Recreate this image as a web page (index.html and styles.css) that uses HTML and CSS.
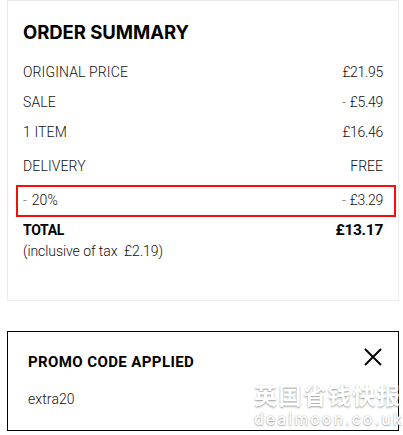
FILE: index.html
```html
<!DOCTYPE html>
<html lang="en">
<head>
  <meta charset="UTF-8">
  <title>Order Summary</title>
  <link rel="stylesheet" href="styles.css">
</head>
<body>

  <!-- Order summary -->
  <section class="summary">
    <h2>ORDER SUMMARY</h2>
    <div class="row"><span class="label">ORIGINAL PRICE</span><span class="price">£21.95</span></div>
    <div class="row"><span class="label">SALE</span><span class="price"><span class="minus">-</span> £5.49</span></div>
    <div class="row"><span class="label">1 ITEM</span><span class="price">£16.46</span></div>
    <div class="row delivery"><span class="label">DELIVERY</span><span>FREE</span></div>
    <div class="row discount"><span class="label"><span class="minus">-</span> 20%</span><span class="price"><span class="minus">-</span> £3.29</span></div>
    <div class="row total"><span>TOTAL</span><span class="total-price">£13.17</span></div>
    <p class="tax">(inclusive of tax &nbsp;£2.19)</p>
  </section>

  <!-- Promo code -->
  <section class="promo">
    <div class="promo-head">
      <h3>PROMO CODE APPLIED</h3>
      <svg class="close" width="18" height="18" viewBox="0 0 18 18">
        <path d="M1 1L17 17M17 1L1 17" fill="none" stroke="#000" stroke-width="1.9"/>
      </svg>
    </div>
    <p class="code">extra20</p>
    <div class="watermark">
      <div class="mark-cn">英国省钱快报</div>
      <div class="mark-url">dealmoon.co.uk</div>
    </div>
  </section>

</body>
</html>
```

FILE: styles.css
```css
* {
  box-sizing: border-box;
}
body {
  margin: 0;
  padding: 0 4px 0 7px;
  height: 435px;
  overflow: hidden;
  background-color: #fff;
  color: #111;
  font-family: Roboto, "Liberation Sans", sans-serif;
  font-size: 14px;
  font-weight: 300;
  line-height: 20px;
}
h2, h3, p {
  margin: 0;
}

/* Order summary */
.summary {
  height: 301px;
  padding: 18px 15px 0;
  border: 1px solid #ebebeb;
}
h2 {
  height: 43px;
  color: #000;
  font-family: Inter, sans-serif;
  font-size: 18.5px;
  font-weight: 700;
  line-height: 26px;
  letter-spacing: -0.05px;
}
.row {
  display: flex;
  justify-content: space-between;
  height: 20px;
  margin-bottom: 10px;
}
.label {
  letter-spacing: 0.12px;
}
.price {
  letter-spacing: -0.3px;
}
.minus {
  color: #777;
  margin-right: 1px;
}
.delivery {
  margin-top: 14px;
}
.discount {
  align-items: center;
  height: 32px;
  margin: -1px -13px 3px -7px;
  padding: 0 11px 2px 5px;
  border: 2px solid #f80d0d;
}
.total {
  margin-bottom: 1px;
  color: #000;
  font-weight: 700;
  letter-spacing: -0.3px;
}
.total-price {
  font-size: 15.5px;
}
.tax {
  letter-spacing: -0.07px;
}

/* Promo code */
.promo {
  position: relative;
  height: 100px;
  margin-top: 30px;
  padding: 16px 16px 0 20px;
  border: 1px solid #000;
}
.promo-head {
  display: flex;
  justify-content: space-between;
  height: 41px;
}
h3 {
  padding-top: 4px;
  color: #000;
  font-size: 15px;
  font-weight: 700;
  line-height: 20px;
  letter-spacing: 0.4px;
}
.code {
  letter-spacing: 0.1px;
}
.watermark {
  position: absolute;
  left: 246px;
  top: 45px;
  color: #fff;
  white-space: nowrap;
  text-shadow: 0 1px 2px #999;
}
.mark-cn {
  height: 34px;
  font-family: "Noto Sans CJK SC", sans-serif;
  font-size: 23px;
  font-weight: 700;
  line-height: 34px;
  letter-spacing: 1.6px;
}
.mark-url {
  font-family: Inter, sans-serif;
  font-size: 16px;
  font-weight: 500;
  line-height: 16px;
  letter-spacing: 1.9px;
  text-shadow: 0 0 2px #aaa, 0 1px 1px #bbb;
}
```
